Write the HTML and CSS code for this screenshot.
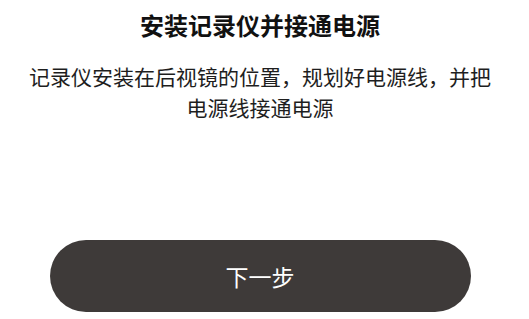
FILE: index.html
```html
<!DOCTYPE html>
<html lang="zh-CN">
<head>
<meta charset="utf-8">
<title>安装记录仪并接通电源</title>
<link rel="stylesheet" href="styles.css">
</head>
<body>
<main class="page">
  <h1 class="title">安装记录仪并接通电源</h1>
  <p class="desc">记录仪安装在后视镜的位置，规划好电源线，并把电源线接通电源</p>
  <button class="next" type="button">下一步</button>
</main>
</body>
</html>
```

FILE: styles.css
```css
html, body {
  margin: 0;
  padding: 0;
  background: #ffffff;
}

.page {
  box-sizing: border-box;
  width: 529px;
  padding: 9px 29px 0 20px;
  display: flex;
  flex-direction: column;
  align-items: center;
  font-family: "Noto Sans CJK SC", "Noto Sans", sans-serif;
}

.title {
  margin: 0;
  font-size: 24px;
  line-height: 32px;
  font-weight: 700;
  color: #111111;
  text-align: center;
}

.desc {
  margin: 20px 0 0;
  font-size: 21px;
  line-height: 31px;
  font-weight: 400;
  color: #1e1e1e;
  text-align: center;
}

.next {
  margin-top: 117px;
  width: 421px;
  height: 72px;
  border: none;
  border-radius: 36px;
  background: #3e3a39;
  color: #ffffff;
  font-family: "Noto Sans CJK SC", "Noto Sans", sans-serif;
  font-size: 23px;
  font-weight: 400;
  padding: 0;
}
```
